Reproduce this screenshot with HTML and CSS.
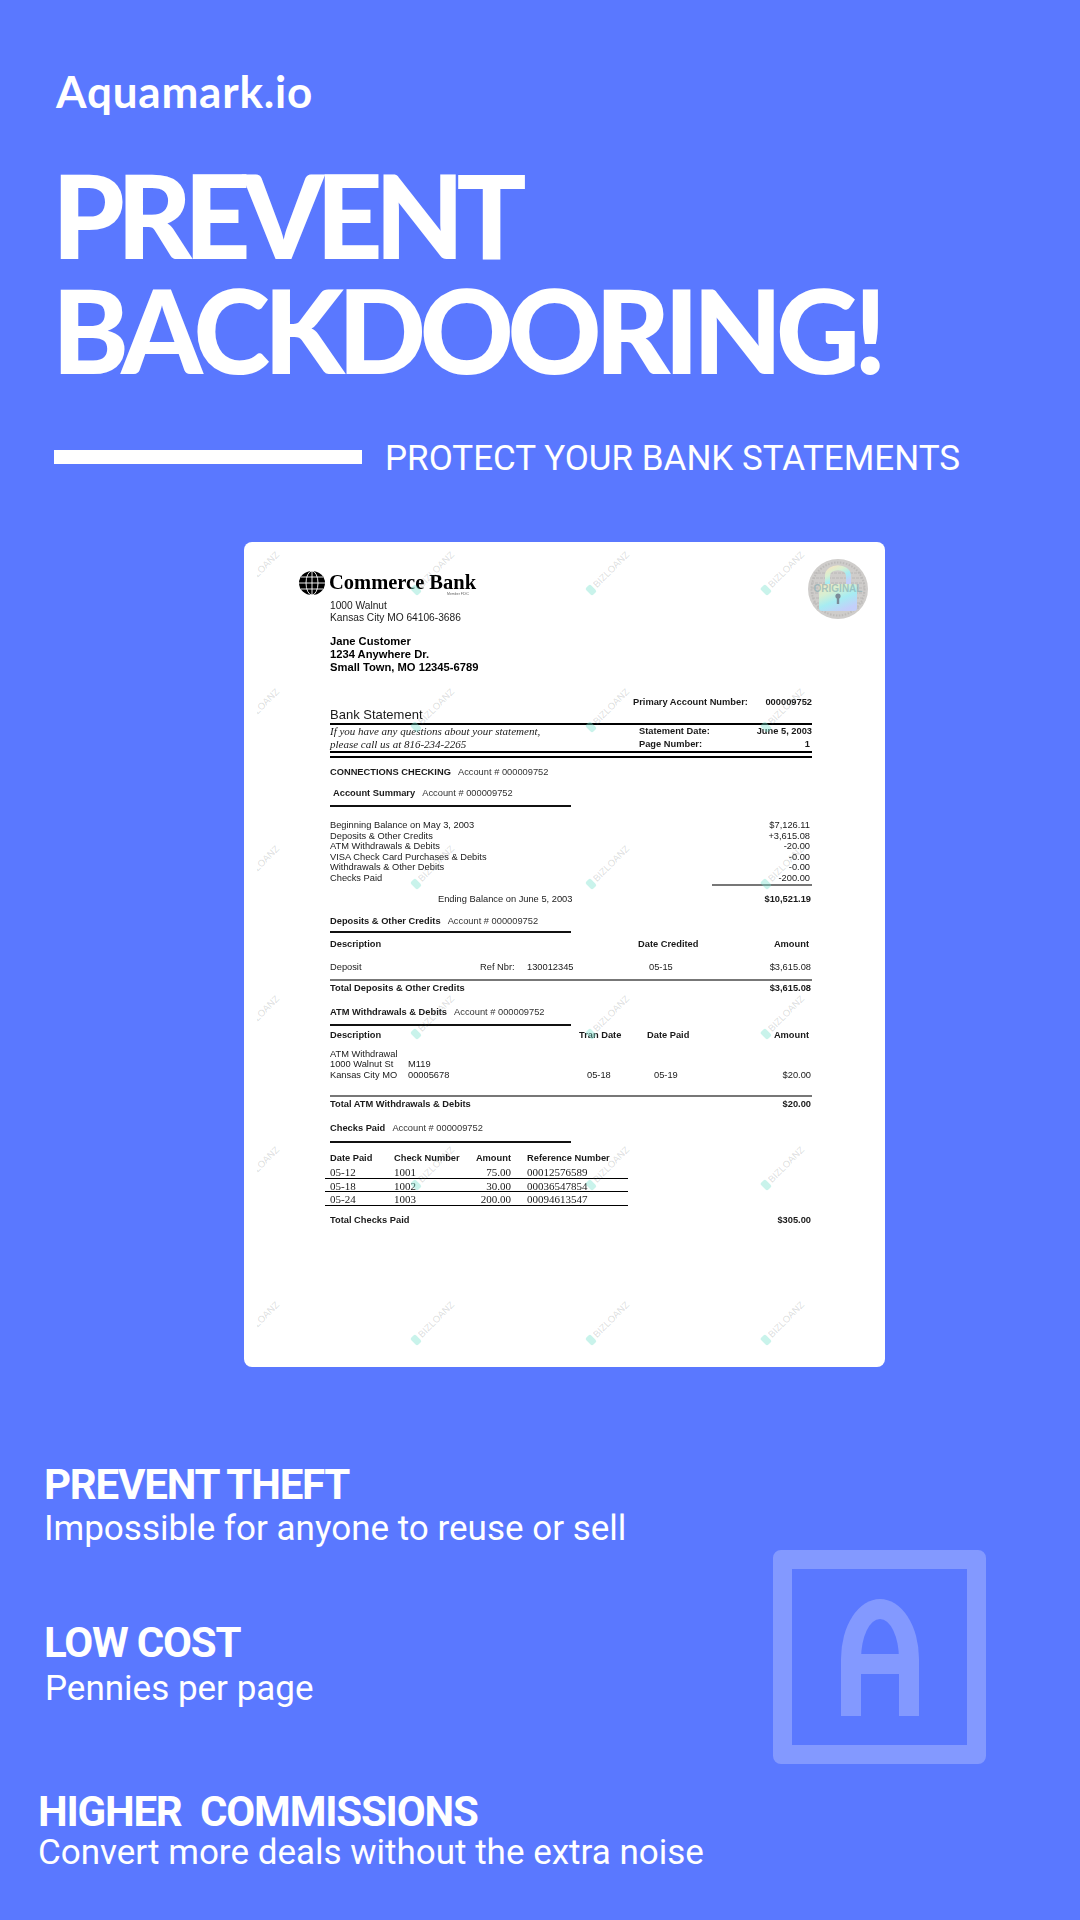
FILE: index.html
```html
<!DOCTYPE html>
<html lang="en">
<head>
  <meta charset="UTF-8">
  <title>Aquamark.io</title>
  <link rel="stylesheet" href="styles.css">
</head>
<body>
  <div class="page">
    <div class="brand">Aquamark.io</div>
    <h1 class="title">
      <span class="title-first">PREVENT</span>
      <span class="title-second">BACKDOORING!</span>
    </h1>
    <div class="tagline">
      <div class="tagline-bar"></div>
      <div class="tagline-text">PROTECT YOUR BANK STATEMENTS</div>
    </div>

    <!-- Sample statement -->
    <div class="card">
      <div class="doc">
        <div class="bank">
          <svg class="globe" viewBox="0 0 26 24">
            <ellipse cx="13" cy="12" rx="13" ry="12" fill="#000"/>
            <g fill="none" stroke="#fff" stroke-width="0.9">
              <ellipse cx="13" cy="12" rx="6" ry="12"/>
              <path d="M13 0V24M0 12H26M2 6H24M2 18H24"/>
            </g>
          </svg>
          <div class="bank-name">Commerce Bank</div>
          <div class="bank-fdic">Member FDIC</div>
        </div>
        <div class="address">1000 Walnut<br>Kansas City MO 64106-3686</div>
        <div class="customer">Jane Customer<br>1234 Anywhere Dr.<br>Small Town, MO 12345-6789</div>

        <div class="primary">
          <b>Primary Account Number:</b>
          <b>000009752</b>
        </div>
        <div class="stmt-title">Bank Statement</div>
        <div class="stmt-box">
          <div class="stmt-note">If you have any questions about your statement,<br>please call us at 816-234-2265</div>
          <div class="stmt-meta">
            <b>Statement Date:</b><b>June 5, 2003</b>
            <b>Page Number:</b><b class="page-no">1</b>
          </div>
        </div>
        <div class="rule-thick"></div>

        <div class="sec first"><b>CONNECTIONS CHECKING</b> <span class="acct">Account # 000009752</span></div>
        <div class="sec summary"><b>Account Summary</b> <span class="acct">Account # 000009752</span></div>
        <div class="sec-rule"></div>

        <div class="summary-list">
          <div class="line"><span>Beginning Balance on May 3, 2003</span><span>$7,126.11</span></div>
          <div class="line"><span>Deposits &amp; Other Credits</span><span>+3,615.08</span></div>
          <div class="line"><span>ATM Withdrawals &amp; Debits</span><span>-20.00</span></div>
          <div class="line"><span>VISA Check Card Purchases &amp; Debits</span><span>-0.00</span></div>
          <div class="line"><span>Withdrawals &amp; Other Debits</span><span>-0.00</span></div>
          <div class="line"><span>Checks Paid</span><span>-200.00</span></div>
        </div>
        <div class="sum-rule"></div>
        <div class="row ending"><span class="ending-label">Ending Balance on June 5, 2003</span><b>$10,521.19</b></div>

        <div class="sec deposits"><b>Deposits &amp; Other Credits</b> <span class="acct">Account # 000009752</span></div>
        <div class="sec-rule tight"></div>
        <div class="cols cols-dep-head">
          <b>Description</b><b>Date Credited</b><b class="amt-head">Amount</b>
        </div>
        <div class="cols cols-dep">
          <span>Deposit</span><span>Ref Nbr:</span><span>130012345</span><span>05-15</span><span>$3,615.08</span>
        </div>
        <div class="grey-rule dep-rule"></div>
        <div class="row"><b>Total Deposits &amp; Other Credits</b><b>$3,615.08</b></div>

        <div class="sec atm"><b>ATM Withdrawals &amp; Debits</b> <span class="acct">Account # 000009752</span></div>
        <div class="sec-rule"></div>
        <div class="cols cols-atm-head">
          <b>Description</b><b>Tran Date</b><b>Date Paid</b><b class="amt-head">Amount</b>
        </div>
        <div class="atm-lines">
          <div>ATM Withdrawal</div>
          <div><span class="atm-left">1000 Walnut St</span>M119</div>
          <div class="cols cols-atm">
            <span><span class="atm-left">Kansas City MO</span>00005678</span><span>05-18</span><span>05-19</span><span>$20.00</span>
          </div>
        </div>
        <div class="grey-rule atm-rule"></div>
        <div class="row"><b>Total ATM Withdrawals &amp; Debits</b><b>$20.00</b></div>

        <div class="sec checks"><b>Checks Paid</b> <span class="acct">Account # 000009752</span></div>
        <div class="sec-rule checks-rule"></div>
        <div class="cols cols-checks checks-head">
          <b>Date Paid</b><b>Check Number</b><b class="num">Amount</b><b>Reference Number</b>
        </div>
        <div class="cols cols-checks check-row"><span>05-12</span><span>1001</span><span class="num">75.00</span><span>00012576589</span></div>
        <div class="cols cols-checks check-row"><span>05-18</span><span>1002</span><span class="num">30.00</span><span>00036547854</span></div>
        <div class="cols cols-checks check-row"><span>05-24</span><span>1003</span><span class="num">200.00</span><span>00094613547</span></div>
        <div class="row checks-total"><b>Total Checks Paid</b><b>$305.00</b></div>
      </div>

      <!-- Repeating watermark, lies over the statement -->
      <div class="marks">
        <div class="marks-grid">
          <div class="mark"><i></i>BIZLOANZ</div><div class="mark"><i></i>BIZLOANZ</div><div class="mark"><i></i>BIZLOANZ</div><div class="mark"><i></i>BIZLOANZ</div>
          <div class="mark"><i></i>BIZLOANZ</div><div class="mark"><i></i>BIZLOANZ</div><div class="mark"><i></i>BIZLOANZ</div><div class="mark"><i></i>BIZLOANZ</div>
          <div class="mark"><i></i>BIZLOANZ</div><div class="mark"><i></i>BIZLOANZ</div><div class="mark"><i></i>BIZLOANZ</div><div class="mark"><i></i>BIZLOANZ</div>
          <div class="mark"><i></i>BIZLOANZ</div><div class="mark"><i></i>BIZLOANZ</div><div class="mark"><i></i>BIZLOANZ</div><div class="mark"><i></i>BIZLOANZ</div>
          <div class="mark"><i></i>BIZLOANZ</div><div class="mark"><i></i>BIZLOANZ</div><div class="mark"><i></i>BIZLOANZ</div><div class="mark"><i></i>BIZLOANZ</div>
          <div class="mark"><i></i>BIZLOANZ</div><div class="mark"><i></i>BIZLOANZ</div><div class="mark"><i></i>BIZLOANZ</div><div class="mark"><i></i>BIZLOANZ</div>
        </div>
      </div>

      <!-- Holographic seal -->
      <svg class="seal" viewBox="0 0 60 60">
        <defs>
          <linearGradient id="holo" x1="0" y1="0" x2="0.6" y2="1">
            <stop offset="0" stop-color="#f4e6c4"/>
            <stop offset="0.35" stop-color="#d6efd2"/>
            <stop offset="0.65" stop-color="#a6ecf2"/>
            <stop offset="1" stop-color="#c3cffa"/>
          </linearGradient>
        </defs>
        <circle cx="30" cy="30" r="30" fill="#cfcdcb"/>
        <circle cx="30" cy="30" r="26.5" fill="none" stroke="#bdbbb9" stroke-width="2" stroke-dasharray="1.5 1.5"/>
        <g stroke="#bab8b7" stroke-width="1" stroke-dasharray="3 1">
          <path d="M6 14H54M4 19H56M3 24H57M3 29H57M3 34H57M4 39H56M5 44H55M9 49H51"/>
        </g>
        <path d="M19.5 26V17C19.5 6 40.5 6 40.5 17V26" fill="none" stroke="url(#holo)" stroke-width="5"/>
        <rect x="11" y="25" width="38" height="27" rx="3" fill="url(#holo)"/>
        <circle cx="30" cy="37" r="2.6" fill="#7b8c98"/>
        <rect x="28.8" y="38" width="2.4" height="7" fill="#7b8c98"/>
        <text class="seal-text" x="30" y="33" text-anchor="middle">ORIGINAL</text>
      </svg>
    </div>

    <!-- Benefits -->
    <div class="bottom">
      <div class="features">
        <div class="feature">
          <div class="feature-title">PREVENT THEFT</div>
          <div class="feature-text feature-reuse">Impossible for anyone to reuse or sell</div>
        </div>
        <div class="feature feature-cost">
          <div class="feature-title">LOW COST</div>
          <div class="feature-text feature-pennies">Pennies per page</div>
        </div>
        <div class="feature feature-higher">
          <div class="feature-title">HIGHER&nbsp; COMMISSIONS</div>
          <div class="feature-text feature-deals">Convert more deals without the extra noise</div>
        </div>
      </div>
      <div class="logo-box">
        <div class="logo-a"></div>
      </div>
    </div>
  </div>
</body>
</html>
```

FILE: styles.css
```css
* {
  margin: 0;
  padding: 0;
  box-sizing: border-box;
}

body {
  width: 1080px;
  height: 1920px;
  overflow: hidden;
  background: #5a78ff;
  color: #fff;
  font-family: Roboto, sans-serif;
}

.page {
  height: 1920px;
  padding-top: 64px;
}

.brand {
  margin-left: 56px;
  font-family: Lato, sans-serif;
  font-size: 44px;
  font-weight: 700;
  line-height: 54px;
  letter-spacing: 0.8px;
}

.title {
  margin: 39px 0 0 52px;
  font-family: Lato, sans-serif;
  font-size: 116px;
  font-weight: 900;
  line-height: 115px;
}

.title span {
  display: block;
}

.title-first {
  letter-spacing: -8px;
}

.title-second {
  letter-spacing: -6.4px;
}

.tagline {
  display: flex;
  align-items: center;
  margin: 47px 0 0 54px;
}

.tagline-bar {
  width: 308px;
  height: 14px;
  background: #fff;
}

.tagline-text {
  margin-left: 23px;
  padding-top: 4px;
  font-size: 35px;
  line-height: 42px;
}

/* statement card */
.card {
  position: relative;
  width: 641px;
  height: 825px;
  margin: 62px 0 0 244px;
  background: #fff;
  border-radius: 8px;
  overflow: hidden;
}

.doc {
  padding: 28px 73px 0 86px;
  color: #1a1a1a;
  font-family: "Liberation Sans", Arial, sans-serif;
  font-size: 9.3px;
  filter: blur(0.3px);
}

.doc b {
  white-space: nowrap;
}

.bank {
  position: relative;
  display: flex;
  align-items: center;
  height: 25px;
  margin-left: -31px;
}

.globe {
  width: 26px;
  height: 24px;
}

.bank-name {
  margin-left: 4px;
  color: #000;
  font-family: "Liberation Serif", serif;
  font-size: 20.5px;
  font-weight: 700;
}

.bank-fdic {
  position: absolute;
  left: 148px;
  bottom: -1px;
  font-size: 3.5px;
  color: #666;
}

.address {
  margin-top: 5px;
  font-size: 10.2px;
  line-height: 12px;
}

.customer {
  margin-top: 11px;
  color: #000;
  font-size: 11.2px;
  font-weight: 700;
  line-height: 13px;
}

.primary {
  display: flex;
  justify-content: space-between;
  margin: 22px 0 -1px 303px;
  line-height: 12px;
}

.stmt-title {
  font-size: 13px;
  line-height: 16px;
}

.stmt-box {
  display: flex;
  justify-content: space-between;
  border-top: 2px solid #000;
  border-bottom: 2px solid #000;
  height: 30px;
  line-height: 13px;
}

.stmt-note {
  font-family: "Liberation Serif", serif;
  font-size: 11px;
  font-style: italic;
}

.stmt-meta {
  display: grid;
  grid-template-columns: 1fr auto;
  width: 173px;
}

.stmt-meta b:nth-child(even) {
  text-align: right;
}

.page-no {
  padding-right: 2px;
}

.rule-thick {
  height: 2px;
  margin-top: 3px;
  background: #000;
}

.sec {
  line-height: 14px;
  margin-top: 7px;
  white-space: pre-wrap;
}

.sec b {
  margin-right: 5px;
}

.acct {
  color: #333;
}

.summary {
  margin-left: 3px;
}

.sec-rule {
  width: 241px;
  height: 2px;
  margin-top: 5px;
  background: #111;
}

.summary-list {
  margin-top: 13px;
}

.line {
  display: flex;
  justify-content: space-between;
  padding-right: 2px;
  line-height: 10.6px;
}

.sum-rule {
  width: 100px;
  height: 2px;
  margin-left: auto;
  background: #777;
}

.row {
  display: flex;
  justify-content: space-between;
  padding-right: 1px;
  line-height: 14px;
}

.ending {
  margin-top: 6px;
}

.ending-label {
  padding-left: 108px;
}

.deposits {
  margin-top: 8px;
}

.sec-rule.tight {
  margin-top: 3px;
}

.cols {
  display: grid;
  line-height: 14px;
}

.cols > :last-child {
  text-align: right;
  padding-right: 1px;
}

.cols > .amt-head {
  padding-right: 3px;
}

.cols-dep-head {
  grid-template-columns: 308px 1fr auto;
  margin-top: 4px;
}

.cols-dep {
  grid-template-columns: 150px 47px 122px 1fr auto;
  margin-top: 9px;
}

.grey-rule {
  height: 2px;
  background: #777;
}

.dep-rule {
  margin-top: 5px;
}

.atm {
  margin-top: 10px;
}

.cols-atm-head {
  grid-template-columns: 249px 68px 1fr auto;
  margin-top: 2px;
}

.atm-lines {
  margin-top: 7px;
  line-height: 10.6px;
}

.atm-left {
  display: inline-block;
  width: 78px;
}

.cols-atm {
  grid-template-columns: 257px 67px 1fr auto;
  line-height: 10.6px;
}

.atm-rule {
  margin-top: 15px;
}

.checks {
  margin-top: 10px;
}

.checks-rule {
  margin-top: 6px;
}

.cols-checks {
  grid-template-columns: 64px 64px 53px auto;
  justify-content: start;
}

.cols-checks > :last-child {
  padding-left: 16px;
  text-align: left;
}

.cols-checks .num {
  text-align: right;
}

.checks-head {
  margin-top: 8px;
}

.check-row {
  width: 303px;
  height: 13.5px;
  margin-left: -5px;
  padding-left: 5px;
  border-bottom: 1px solid #000;
  font-family: "Liberation Serif", serif;
  font-size: 11px;
  line-height: 15px;
}

.checks-total {
  margin-top: 7px;
}

/* watermark layer */
.marks {
  position: absolute;
  top: 0;
  left: 13px;
  right: 0;
  bottom: 0;
  overflow: hidden;
}

.marks-grid {
  display: grid;
  grid-template-columns: repeat(4, 175px);
  grid-template-rows: 140px 134px 180px 120px 182px 128px;
  margin: -40px 0 0 -87px;
  place-items: center;
}

.mark {
  display: flex;
  align-items: center;
  gap: 2px;
  transform: rotate(-45deg);
  color: rgba(90, 100, 100, 0.22);
  font-family: "Liberation Sans", Arial, sans-serif;
  font-size: 9.5px;
  white-space: nowrap;
}

.mark i {
  width: 7px;
  height: 10px;
  border-radius: 2px;
  background: rgba(120, 225, 205, 0.4);
}

.seal {
  position: absolute;
  top: 17px;
  right: 17px;
  width: 60px;
  height: 60px;
}

.seal-text {
  fill: #7fa6ad;
  fill-opacity: 0.6;
  font-family: "Liberation Sans", Arial, sans-serif;
  font-size: 10px;
  font-weight: 700;
}

/* benefits */
.bottom {
  display: flex;
  justify-content: space-between;
  align-items: flex-start;
  padding: 93px 94px 0 44px;
}

.feature-title {
  font-size: 42px;
  font-weight: 700;
  line-height: 50px;
  letter-spacing: -1.2px;
}

.feature-text {
  font-size: 35px;
  line-height: 44px;
}

.feature-reuse {
  margin-top: -3px;
}

.feature-cost {
  margin-top: 67px;
}

.feature-pennies {
  margin: -1px 0 0 1px;
}

.feature-higher {
  margin: 76px 0 0 -6px;
}

.feature-deals {
  margin-top: -6px;
}

.logo-box {
  display: flex;
  justify-content: center;
  align-items: flex-end;
  width: 213px;
  height: 214px;
  margin-top: 90px;
  padding-bottom: 29px;
  border: 19px solid #8399ff;
  border-radius: 8px;
}

.logo-a {
  position: relative;
  width: 78px;
  height: 117px;
  border: 20px solid #8399ff;
  border-bottom: 0;
  border-radius: 39px 39px 0 0 / 60px 60px 0 0;
}

.logo-a::after {
  content: "";
  position: absolute;
  left: 0;
  right: 0;
  top: 35px;
  height: 20px;
  background: #8399ff;
}
```
